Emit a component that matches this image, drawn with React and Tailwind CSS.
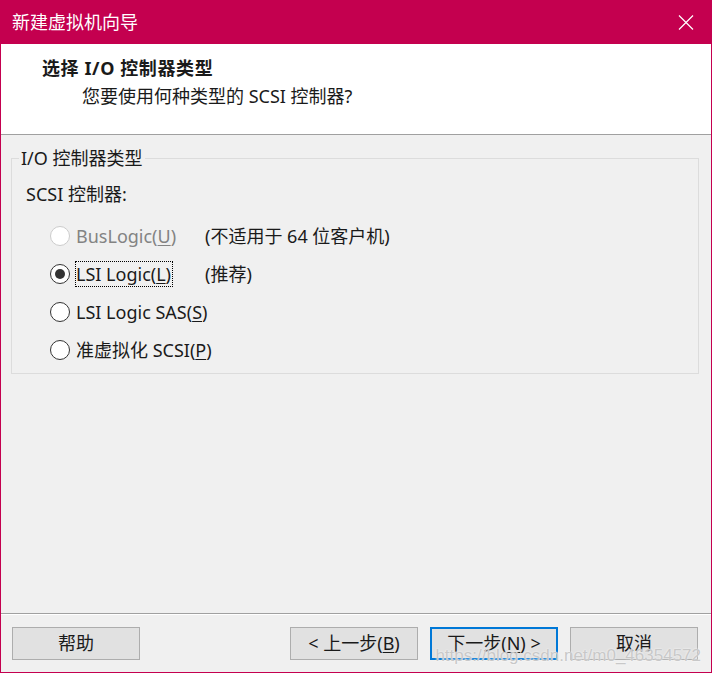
import React from "react";

const FONT = "font-['Noto_Sans','Noto_Sans_CJK_SC',sans-serif]";

function Radio({ checked, disabled }) {
  return (
    <span
      className={
        "flex h-[20px] w-[20px] shrink-0 items-center justify-center rounded-full border bg-white " +
        (disabled ? "border-[#cccccc]" : "border-[#333333]")
      }
    >
      {checked && <span className="h-[10px] w-[10px] rounded-full bg-[#333333]" />}
    </span>
  );
}

function U({ children }) {
  return <span className="underline underline-offset-2">{children}</span>;
}

function Btn({ children, primary }) {
  return (
    <button
      className={
        "flex h-[33px] w-[128px] items-center justify-center bg-[#e1e1e1] text-[18px] text-[#1a1a1a] " +
        (primary ? "border-2 border-[#0078d7]" : "border border-[#adadad]")
      }
    >
      {children}
    </button>
  );
}

export default function App() {
  return (
    <div
      className={
        "relative flex h-[673px] w-[712px] flex-col border-x border-b border-[#c4004f] bg-[#f0f0f0] text-[#1a1a1a] " +
        FONT
      }
    >
      {/* title bar */}
      <div className="-mx-px flex h-[44px] shrink-0 items-center justify-between bg-[#c4004f] pl-[12px] pr-[18px]">
        <span className="text-[18px] leading-none text-white">新建虚拟机向导</span>
        <svg width="16" height="15" viewBox="0 0 16 15" className="text-white">
          <path d="M1 0.5 L15 14.5 M15 0.5 L1 14.5" stroke="currentColor" strokeWidth="1.2" fill="none" />
        </svg>
      </div>

      {/* header */}
      <div className="flex h-[91px] shrink-0 flex-col border-b border-[#a0a0a0] bg-white">
        <div className="ml-[41px] mt-[11px] h-[26px] text-[18px] font-bold leading-[26px] tracking-[0.6px]">
          选择 I/O 控制器类型
        </div>
        <div className="ml-[81px] mt-[2px] h-[26px] text-[18px] leading-[26px]">您要使用何种类型的 SCSI 控制器?</div>
      </div>

      {/* content */}
      <div className="flex flex-1 flex-col pl-[10px] pr-[12px]">
        <fieldset className="mt-[11px] border border-[#dcdcdc] px-[14px] pb-[4px]">
          <legend className="-ml-[7px] px-[2px] text-[18px] leading-[24px]">I/O 控制器类型</legend>
          <div className="mt-[12px] h-[24px] text-[18px] leading-[24px]">SCSI 控制器:</div>
          <div className="mt-[11px] flex flex-col pl-[24px] text-[18px]">
            <div className="flex h-[38px] items-center">
              <Radio disabled />
              <span className="ml-[6px] w-[129px] text-[#838383]">
                BusLogic(<U>U</U>)
              </span>
              <span>(不适用于 64 位客户机)</span>
            </div>
            <div className="flex h-[38px] items-center">
              <Radio checked />
              <span className="ml-[5px] w-[130px]">
                <span className="border border-dotted border-black pr-[1px] leading-[22px]">
                  LSI Logic(<U>L</U>)
                </span>
              </span>
              <span>(推荐)</span>
            </div>
            <div className="flex h-[38px] items-center">
              <Radio />
              <span className="ml-[6px]">
                LSI Logic SAS(<U>S</U>)
              </span>
            </div>
            <div className="flex h-[38px] items-center">
              <Radio />
              <span className="ml-[6px]">
                准虚拟化 SCSI(<U>P</U>)
              </span>
            </div>
          </div>
        </fieldset>
      </div>

      {/* footer */}
      <div className="shrink-0 border-t border-[#a0a0a0]">
        <div className="border-t border-white" />
        <div className="flex items-center pb-[12px] pl-[11px] pr-[13px] pt-[12px]">
          <Btn>帮助</Btn>
          <div className="flex-1" />
          <div className="flex gap-[12px]">
            <Btn>
              &lt; 上一步(<U>B</U>)
            </Btn>
            <Btn primary>
              下一步(<U>N</U>) &gt;
            </Btn>
            <Btn>取消</Btn>
          </div>
        </div>
      </div>

      {/* watermark overlay */}
      <div className="pointer-events-none absolute bottom-[4px] right-[10px] font-['Liberation_Sans',sans-serif] text-[17px] text-[#c8c8c8] [text-shadow:0_0_2px_#ffffff]">
        https://blog.csdn.net/m0_46354572
      </div>
    </div>
  );
}
